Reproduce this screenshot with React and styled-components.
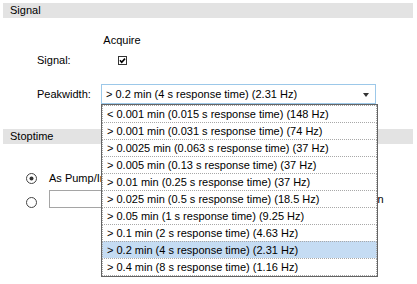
import React from 'react';
import styled, { createGlobalStyle } from 'styled-components';

const GlobalStyle = createGlobalStyle`
    html, body {
        margin: 0;
        padding: 0;
        background: #ffffff;
    }
    body {
        font-family: "Liberation Sans", Arial, sans-serif;
        font-size: 11px;
        color: #000000;
    }
`;

const PEAKWIDTHS = [
    '< 0.001 min (0.015 s response time) (148 Hz)',
    '> 0.001 min (0.031 s response time) (74 Hz)',
    '> 0.0025 min (0.063 s response time) (37 Hz)',
    '> 0.005 min (0.13 s response time) (37 Hz)',
    '> 0.01 min (0.25 s response time) (37 Hz)',
    '> 0.025 min (0.5 s response time) (18.5 Hz)',
    '> 0.05 min (1 s response time) (9.25 Hz)',
    '> 0.1 min (2 s response time) (4.63 Hz)',
    '> 0.2 min (4 s response time) (2.31 Hz)',
    '> 0.4 min (8 s response time) (1.16 Hz)'
];

const Panel = styled.div`
    position: relative;
    width: 417px;
    height: 284px;
    overflow: hidden;
    padding-top: 3px;
    box-sizing: border-box;
    line-height: 13px;
`;

const SectionHeader = styled.div`
    height: 15px;
    line-height: 15px;
    margin: 0 4px 0 3px;
    padding-left: 7px;
    background: #e3e3e3;
`;

const SignalBody = styled.div`
    display: flex;
    flex-direction: column;
    padding: 16px 0 25px 37px;
`;

const StopBody = styled.div`
    display: flex;
    flex-direction: column;
    padding: 24px 0 0 26px;
`;

const Row = styled.div`
    display: flex;
    align-items: ${ p => p.$align || 'center' };
    margin-top: ${ p => p.$top || 0 }px;
    min-height: 13px;
`;

const Label = styled.span`
    width: 64px;
    flex: none;
`;

const Cell = styled.span`
    width: 42px;
    display: flex;
    justify-content: center;
`;

const Select = styled.div`
    display: flex;
    align-items: center;
    justify-content: space-between;
    box-sizing: border-box;
    width: 275px;
    height: 20px;
    padding: 0 6px 0 4px;
    border: 1px solid #9cc8e9;
    background: #ffffff;
`;

const Arrow = styled.span`
    width: 0;
    height: 0;
    border-left: 3.5px solid transparent;
    border-right: 3.5px solid transparent;
    border-top: 4px solid #333333;
    margin-top: 1px;
`;

const RadioText = styled.span`
    margin-left: 12px;
    white-space: nowrap;
`;

const TextInput = styled.div`
    box-sizing: border-box;
    width: 313px;
    height: 18px;
    margin-left: 12px;
    border: 1px solid #a5a5a5;
    background: #ffffff;
`;

const Unit = styled.span`
    margin-left: 4px;
    margin-bottom: 2px;
`;

const DropList = styled.ul`
    position: absolute;
    top: 104px;
    left: 101px;
    width: 277px;
    margin: 0;
    padding: 0;
    list-style: none;
    box-sizing: border-box;
    border: 1px solid #646464;
    background: #ffffff;
`;

const DropItem = styled.li`
    box-sizing: border-box;
    height: 18px;
    line-height: 16px;
    margin-top: -1px;
    padding-left: 4px;
    border: 1px dotted #a8a8a8;
    white-space: nowrap;
    background: ${ p => p.$selected ? '#c5dcf3' : '#ffffff' };

    &:first-child {
        margin-top: 0;
    }
`;

const CheckBox = () => (
    <svg width="9" height="9" viewBox="0 0 9 9">
        <rect x="0.5" y="0.5" width="8" height="8" fill="#ffffff" stroke="#333333" />
        <path d="M2 4.3 L3.7 6.2 L7 2.6" fill="none" stroke="#000000" strokeWidth="1.6" />
    </svg>
);

const Radio = ( { checked } ) => (
    <svg width="11" height="11" viewBox="0 0 11 11" style={ { flex: 'none' } }>
        <circle cx="5.5" cy="5.5" r="5" fill="#ffffff" stroke="#444444" />
        { checked && <circle cx="5.5" cy="5.5" r="2" fill="#333333" /> }
    </svg>
);

function App() {
    const selected = 8;

    return (
        <Panel>
            <GlobalStyle />
            <SectionHeader>Signal</SectionHeader>
            <SignalBody>
                <Row>
                    <Label />
                    <Cell>Acquire</Cell>
                </Row>
                <Row $top={ 7 }>
                    <Label>Signal:</Label>
                    <Cell><CheckBox /></Cell>
                </Row>
                <Row $top={ 17 }>
                    <Label>Peakwidth:</Label>
                    <Select>
                        <span>{ PEAKWIDTHS[ selected ] }</span>
                        <Arrow />
                    </Select>
                </Row>
            </SignalBody>
            <SectionHeader>Stoptime</SectionHeader>
            <StopBody>
                <Row style={ { height: 20 } }>
                    <Radio checked />
                    <RadioText>As Pump/Injector</RadioText>
                </Row>
                <Row $top={ 2 } $align="flex-end">
                    <Radio />
                    <TextInput />
                    <Unit>min</Unit>
                </Row>
            </StopBody>
            <DropList>
                { PEAKWIDTHS.map( ( text, i ) => (
                    <DropItem key={ text } $selected={ i === selected }>{ text }</DropItem>
                ) ) }
            </DropList>
        </Panel>
    );
}

export default App;
